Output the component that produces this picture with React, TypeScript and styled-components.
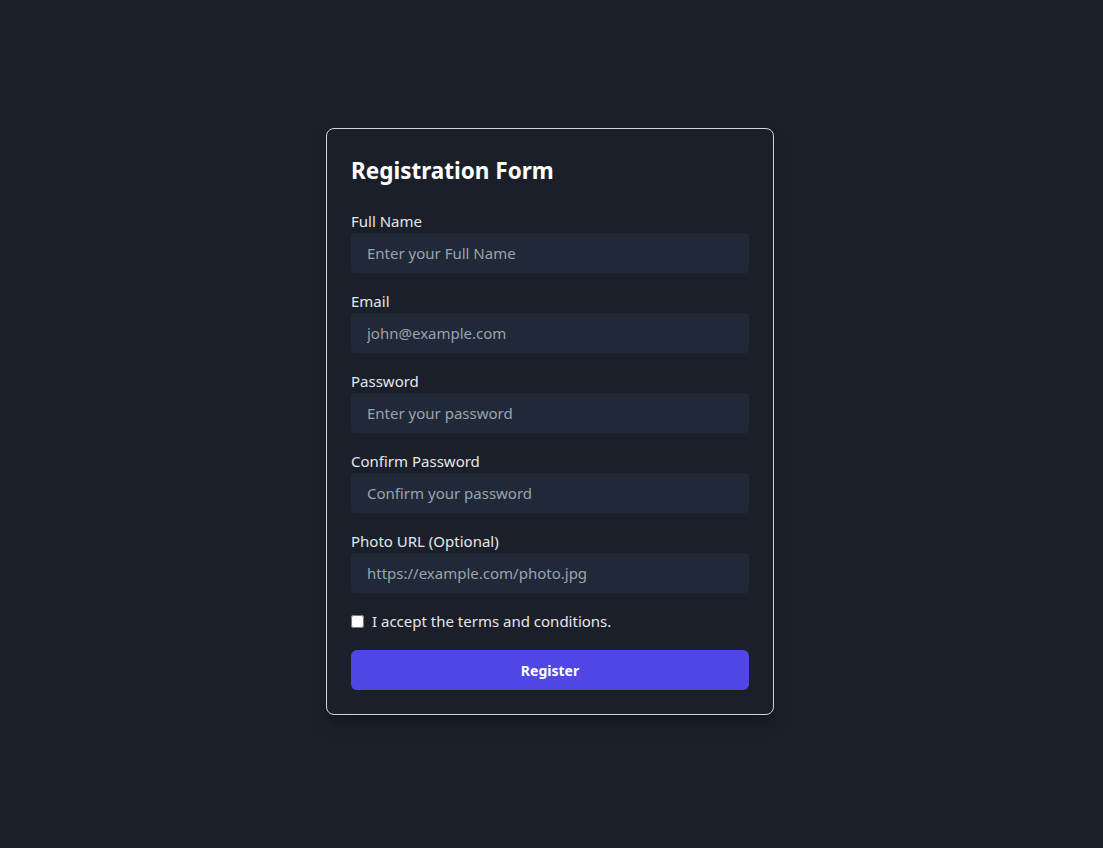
import React, { useState } from 'react'
import styled, { createGlobalStyle } from 'styled-components'

const GlobalStyle = createGlobalStyle`
  * {
    box-sizing: border-box;
  }

  body {
    margin: 0;
    background: #1b1f2a;
    font-family: 'Noto Sans', 'Open Sans', sans-serif;
    color: #e5e7eb;
  }
`

const Page = styled.div`
  min-height: 100vh;
  display: flex;
  justify-content: center;
  align-items: flex-start;
  padding: 128px 3px 0 0;
`

const Card = styled.form`
  width: 448px;
  padding: 24px;
  background: #1b1f2a;
  border: 1px solid #d1d5db;
  border-radius: 8px;
  box-shadow: 0 10px 15px -3px rgba(0, 0, 0, 0.25), 0 4px 6px -4px rgba(0, 0, 0, 0.2);
`

const Title = styled.h2`
  margin: 0 0 20px;
  font-size: 22.5px;
  line-height: 36px;
  font-weight: 700;
  color: #ffffff;
`

const Field = styled.div`
  margin-bottom: 16px;
`

const Label = styled.label`
  display: block;
  font-size: 15px;
  line-height: 24px;
  color: #e5e7eb;
`

const Input = styled.input`
  display: block;
  width: 100%;
  height: 40px;
  padding: 0 16px;
  border: none;
  border-radius: 4px;
  background: #1f2937;
  color: #e5e7eb;
  font-family: inherit;
  font-size: 15px;
  outline: none;

  &::placeholder {
    color: #9ca3af;
  }
`

const CheckRow = styled.label`
  display: flex;
  align-items: center;
  gap: 8px;
  height: 24px;
  font-size: 15px;
  color: #e5e7eb;
`

const Checkbox = styled.input`
  width: 13px;
  height: 13px;
  margin: 0;
`

const Button = styled.button`
  display: block;
  width: 100%;
  height: 40px;
  margin-top: 17px;
  border: none;
  border-radius: 6px;
  background: #4f46e5;
  color: #ffffff;
  font-family: inherit;
  font-size: 14px;
  font-weight: 700;
  cursor: pointer;
`

const fields = [
  { label: 'Full Name', type: 'text', placeholder: 'Enter your Full Name' },
  { label: 'Email', type: 'email', placeholder: 'john@example.com' },
  { label: 'Password', type: 'password', placeholder: 'Enter your password' },
  { label: 'Confirm Password', type: 'password', placeholder: 'Confirm your password' },
  { label: 'Photo URL (Optional)', type: 'text', placeholder: 'https://example.com/photo.jpg' }
]

const App = () => {
  const [accepted, setAccepted] = useState<boolean>(false)

  return (
    <>
      <GlobalStyle />
      <Page>
        <Card onSubmit={e => e.preventDefault()}>
          <Title>Registration Form</Title>

          {fields.map(f => (
            <Field key={f.label}>
              <Label>{f.label}</Label>
              <Input type={f.type} placeholder={f.placeholder} />
            </Field>
          ))}

          <CheckRow>
            <Checkbox
              type='checkbox'
              checked={accepted}
              onChange={() => setAccepted(!accepted)}
            />
            I accept the terms and conditions.
          </CheckRow>

          <Button type='submit'>Register</Button>
        </Card>
      </Page>
    </>
  )
}

export default App
